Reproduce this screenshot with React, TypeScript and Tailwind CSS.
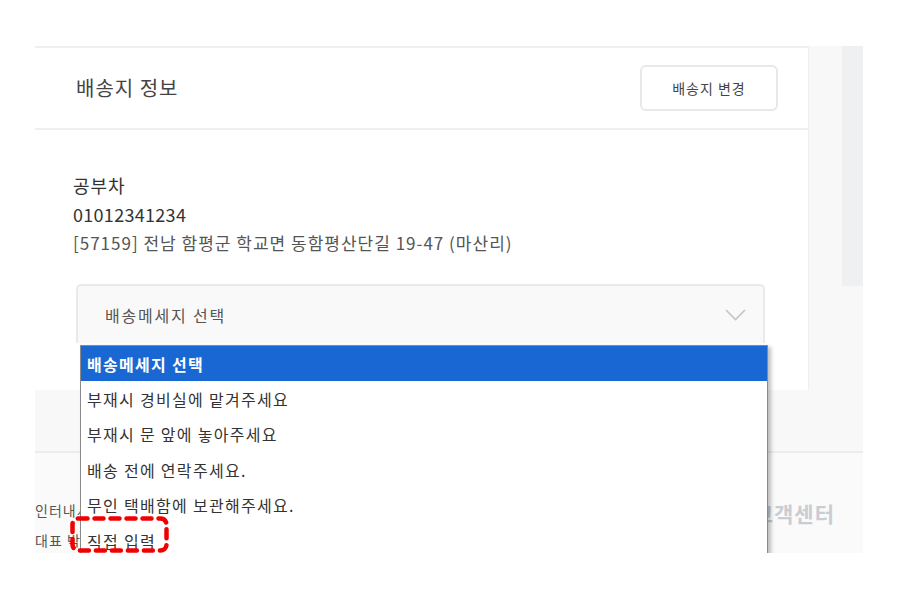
import React from "react";

const options = [
  "배송메세지 선택",
  "부재시 경비실에 맡겨주세요",
  "부재시 문 앞에 놓아주세요",
  "배송 전에 연락주세요.",
  "무인 택배함에 보관해주세요.",
  "직접 입력",
];

export default function App() {
  return (
    <div
      className="w-[900px] h-[600px] bg-white pt-[46px] pl-[35px]"
      style={{ fontFamily: '"Noto Sans CJK KR", "Noto Sans", sans-serif' }}
    >
      <div className="relative w-[828px] h-[507px] overflow-hidden bg-[#f8f8f8]">
        {/* top: card + side column */}
        <div className="flex h-[344px]">
          <div className="w-[774px] bg-white border-t-2 border-r border-[#efefef] flex flex-col">
            <div className="h-[82px] shrink-0 flex items-center justify-between pl-[41px] pr-[30px] border-b-2 border-[#efefef]">
              <h2 className="text-[20px] text-[#444] tracking-[1px]">배송지 정보</h2>
              <button className="w-[138px] h-[46px] rounded-[6px] border-2 border-[#e8e8e8] bg-white text-[14px] tracking-[1px] text-[#444]">
                배송지 변경
              </button>
            </div>
            <div className="pt-[41px] pl-[38px] text-[#333]">
              <p className="text-[18px] leading-[29px] tracking-[1px]">공부차</p>
              <p className="text-[18px] leading-[29px] tracking-[0.3px]">01012341234</p>
              <p className="text-[17px] leading-[27px] tracking-[1px] text-[#555]">[57159] 전남 함평군 학교면 동함평산단길 19-47 (마산리)</p>
            </div>
            <div className="mt-[28px] ml-[41px] w-[689px] h-[59px] rounded-t-[5px] border-2 border-b-0 border-[#eaeaea] bg-[#f9f9f9] flex items-center justify-between pl-[27px] pr-[17px]">
              <span className="text-[16px] tracking-[1.8px] text-[#555]">배송메세지 선택</span>
              <svg width="21" height="12" viewBox="0 0 21 12" fill="none">
                <polyline points="1,1 10.5,10.5 20,1" stroke="#c4c4c4" strokeWidth="1.6" />
              </svg>
            </div>
          </div>
          <div className="flex-1 flex justify-end">
            <div className="w-[21px] h-[240px] bg-[#eff0f2]" />
          </div>
        </div>

        {/* gray band */}
        <div className="h-[61px] bg-[#f8f8f8]" />

        {/* footer */}
        <div className="h-[102px] border-t-2 border-[#ececec] bg-[#fafafa] flex justify-between">
          <div className="pt-[42px] text-[14px] leading-[30px] tracking-[1px] text-[#555] whitespace-nowrap">
            <p>인터내셔널 주식회사</p>
            <p>대표 박서준</p>
          </div>
          <div className="pt-[45px] pr-[28px] text-[21px] tracking-[1px] font-bold text-[#c9cdd3]">고객센터</div>
        </div>

        {/* open native select list */}
        <div className="absolute left-[45px] top-[299px] w-[688px] bg-white border border-[#8a8a8a] shadow-[3px_2px_4px_rgba(0,0,0,0.25)]">
          {options.map((o, i) => (
            <div
              key={o}
              className={
                i === 0
                  ? "h-[35.4px] flex items-center pl-[6px] text-[16px] tracking-[1.3px] font-bold text-white bg-[#1967d2]"
                  : "h-[35.4px] flex items-center pl-[6px] text-[16px] tracking-[1.3px] text-[#333]"
              }
            >
              {o}
            </div>
          ))}
        </div>

        {/* annotation */}
        <svg className="absolute left-[35px] top-[470px]" width="99" height="37" viewBox="0 0 99 37" fill="none">
          <rect x="2.5" y="2.5" width="94" height="32" rx="6" stroke="#f00000" strokeWidth="4.5" strokeDasharray="9 7" strokeLinecap="round" />
        </svg>
      </div>
    </div>
  );
}
